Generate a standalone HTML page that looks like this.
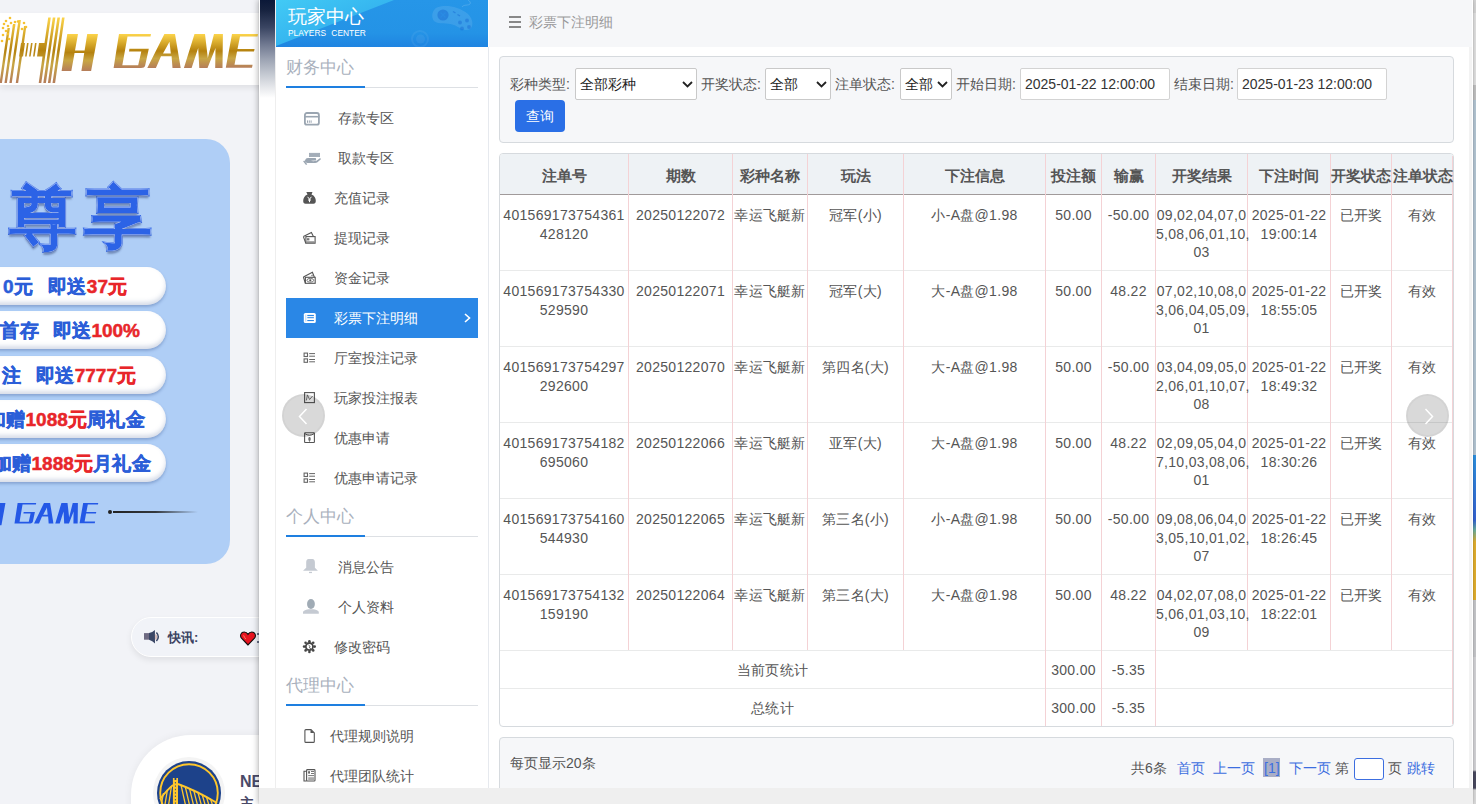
<!DOCTYPE html>
<html><head><meta charset="utf-8">
<style>
*{box-sizing:border-box;margin:0;padding:0}
html,body{width:1476px;height:804px;overflow:hidden}
body{position:relative;background:#f2f3f7;font-family:"Liberation Sans",sans-serif;font-size:14px;color:#555}
.a{position:absolute}
/* ---------- background page ---------- */
#banner{position:absolute;left:0;top:13px;width:300px;height:72px;background:#fff;box-shadow:0 3px 6px rgba(0,0,0,.08)}
#promo{position:absolute;left:-40px;top:139px;width:270px;height:425px;background:#afcef6;border-radius:24px}
.pill{position:absolute;left:-60px;width:266px;height:38px;background:#fff;border-radius:19px;box-shadow:0 2px 3px rgba(60,90,150,.35), inset 0 -3px 4px rgba(120,140,180,.3);font-weight:bold;font-size:19px;letter-spacing:.4px;word-spacing:5px;line-height:39px;color:#2b5ed8;-webkit-text-stroke:.5px currentColor;white-space:nowrap;text-align:right;padding-right:40px}
.pill b{color:#e8262a;letter-spacing:0px}
#news{position:absolute;left:131px;top:617px;width:200px;height:40px;border-radius:20px;background:#f1f3f8;border:1px solid #fff;box-shadow:0 3px 6px rgba(0,0,0,.08)}
#card2{position:absolute;left:131px;top:735px;width:300px;height:200px;border-radius:60px;background:#fff;box-shadow:0 0 8px rgba(0,0,0,.06)}
/* ---------- modal ---------- */
#mshadow{position:absolute;left:259px;top:0;width:1214px;height:804px;box-shadow:-1px 0 6px rgba(0,0,0,.28), 0 0 1px rgba(0,0,0,.2);background:#fff}
#stripline{position:absolute;left:275px;top:0;width:1px;height:788px;background:#eeeeee}
#strip{position:absolute;left:260px;top:0;width:15px;height:98px;background:linear-gradient(#0b1838 0%,#16223f 10%,#3a4562 28%,#6f7890 45%,#9ba2b2 60%,#c2c7d0 75%,#e3e5e9 88%,#fff 100%)}
#sidehead{position:absolute;left:276px;top:0;width:212px;height:47px;background:linear-gradient(#2696e8 0%,#2493e6 70%,#1f84e1 100%);overflow:hidden}
#sideborder{position:absolute;left:488px;top:47px;width:1px;height:757px;background:#e6e9ee}
.sec{position:absolute;left:286px;width:192px;height:30px;color:#a9b1bd;font-size:17px;line-height:20px}
.sec:after{content:"";position:absolute;left:0;top:29px;width:192px;height:1px;background:#dde0e4}
.sec:before{content:"";position:absolute;left:0;top:28px;width:79px;height:2px;background:#1e7fe0;z-index:1}
.mi{position:absolute;left:286px;width:192px;height:40px;line-height:40px;color:#555;font-size:14px}
.mi svg{position:absolute}
.mi .tx{position:absolute;top:0}
.mi.act{background:#2a87e6;color:#fff}
#chead{position:absolute;left:489px;top:0;width:983px;height:47px;background:#f6f7f9}
#rstrip{position:absolute;left:1469px;top:47px;width:3px;height:741px;background:#f3f3f3}
.box{position:absolute;background:#f6f7f9;border:1px solid #d6dade;border-radius:4px}
.lbl{position:absolute;top:74px;line-height:20px;font-size:14px;color:#555;white-space:nowrap}
.sel{position:absolute;top:68px;height:32px;background:#fff;border:1px solid #c9c9c9;border-radius:2px;color:#222;font-size:14px;line-height:30px;padding-left:4px;white-space:nowrap}
.sel svg{position:absolute;right:3px;top:12px}
.inp{position:absolute;top:68px;height:32px;background:#fff;border:1px solid #d3d3d3;border-radius:2px;color:#333;font-size:14px;line-height:30px;padding-left:4px;white-space:nowrap}
#btn{position:absolute;left:515px;top:100px;width:50px;height:32px;background:#2a6fe6;border-radius:4px;color:#fff;font-size:14px;line-height:32px;text-align:center}
/* table */
.tb{position:absolute;border:1px solid #d6dade;border-radius:4px;background:#fff}
.th{position:absolute;background:#eef2f5;border-radius:3px 3px 0 0}
.hl{position:absolute;height:1px;background:#e9eaea}
.hl.hb{background:#a09a9a}
.vl{position:absolute;width:1px;background:#f4d2d5}
.ht{position:absolute;top:156px;height:39px;line-height:39px;text-align:center;font-weight:bold;font-size:15px;color:#555;white-space:nowrap}
.td{position:absolute;text-align:center;font-size:14px;line-height:18.5px;color:#555;white-space:nowrap;letter-spacing:.3px}
.ts{position:absolute;height:37px;line-height:38px;text-align:center;font-size:14px;color:#555;white-space:nowrap;letter-spacing:.3px}
#hscroll{position:absolute;left:259px;top:788px;width:1214px;height:16px;background:#efefef}
.arrow{position:absolute;width:43px;height:43px;border-radius:50%;background:rgba(0,0,0,.15);border:2px solid rgba(0,0,0,.03);top:394px}
.pg{position:absolute;top:758px;line-height:20px;font-size:14px;white-space:nowrap;color:#555}
.pg.l{color:#3c6ee0}
</style></head><body>

<!-- background page -->
<div id="banner">
 <svg width="260" height="72" style="position:absolute;left:0;top:0">
  <defs>
   <linearGradient id="gold" x1="0" y1="0" x2="0" y2="1">
    <stop offset="0" stop-color="#fcd44a"/><stop offset=".5" stop-color="#b5820f"/><stop offset=".72" stop-color="#c8a644"/><stop offset="1" stop-color="#b57d5a"/>
   </linearGradient>
   <linearGradient id="gold2" x1="0" y1="0" x2="0" y2="1" gradientUnits="userSpaceOnUse" >
    <stop offset="0.06" stop-color="#fcd44a"/><stop offset=".5" stop-color="#b5820f"/><stop offset=".75" stop-color="#c8a644"/><stop offset=".95" stop-color="#b57d5a"/>
   </linearGradient>
  </defs>
  <g fill="url(#gold)">
   <!-- striped H -->
   <path d="M48.20 4.5 L50.80 4.5 L41.30 70 L38.70 70Z M52.80 4.5 L55.40 4.5 L45.90 70 L43.30 70Z M57.40 4.5 L60.00 4.5 L50.50 70 L47.90 70Z M62.00 4.5 L64.60 4.5 L55.10 70 L52.50 70Z M7.50 15 L9.90 15 L1.93 70 L-0.47 70Z M13.00 11 L15.40 11 L6.85 70 L4.45 70Z M18.50 7 L20.90 7 L11.77 70 L9.37 70Z M24.00 13 L26.40 13 L18.14 70 L15.74 70Z M21.00 30 L25.00 30 L23.04 43.5 L19.04 43.5Z M27.00 30 L28.60 30 L26.64 43.5 L25.04 43.5Z M31.00 30 L32.60 30 L30.64 43.5 L29.04 43.5Z M35.00 30 L36.60 30 L34.64 43.5 L33.04 43.5Z M39.00 30 L45.00 30 L43.04 43.5 L37.04 43.5Z"/>
   <g id="hgame">
   <!-- H -->
   <path d="M67.3 21 L78 21 L71.3 58 L61.6 58Z M87.2 21 L98 21 L91.1 58 L81.4 58Z M72 37.5 L90 37.5 L89.5 40 L71.5 40Z"/>
   <!-- G -->
   <path d="M119 21 L151 21 L150.5 23.6 L127.5 23.6 L122.3 52.2 L138.2 52.2 L141.3 38.4 L129 38.4 L129.4 35.8 L148.8 35.8 L145.1 52.8 Q144.4 55 141 55 L113.6 55Z"/>
   <!-- A -->
   <path d="M147.3 55 L164.4 21 L175 21 L180.7 55 L172.5 55 L171.6 43.3 L161 43.3 L155.9 55Z M163 40.5 L170.8 40.5 L169.5 28.7Z" fill-rule="evenodd"/>
   <!-- M -->
   <path d="M183.9 55 L194.5 21 L205 21 L207.8 45 L214 21 L222.9 21 L222.5 55 L215.2 55 L215.5 35 L207.5 55 L199.3 55 L198.2 35 L191.6 55Z"/>
   <!-- E -->
   <path d="M232 21 L258 21 L257.5 23.6 L240 23.6 L237.5 36 L254.6 36 L254 38.4 L237 38.4 L234.5 51.8 L252.6 51.8 L252 54.7 L225.8 54.7Z"/>
   </g>
  </g>
  <g fill="#f6c232">
   <circle cx="10" cy="5" r="1.3"/><circle cx="6" cy="8" r="1.3"/><circle cx="11" cy="10" r="1.3"/><circle cx="4" cy="11" r="1.3"/><circle cx="15" cy="9" r="1.3"/><circle cx="18" cy="8.5" r="1.3"/><circle cx="24" cy="10" r="1.3"/><circle cx="26" cy="14" r="1.3"/><circle cx="3" cy="15" r="1.3"/><circle cx="8" cy="13" r="1.3"/><circle cx="6" cy="18" r="1.3"/><circle cx="3" cy="22" r="1.3"/><circle cx="2" cy="28" r="1.3"/><circle cx="8" cy="21" r="1.3"/><circle cx="9" cy="26" r="1.3"/><circle cx="22" cy="16" r="1.3"/><circle cx="14" cy="13" r="1.3"/>
  </g>
 </svg>
</div>

<div id="promo">
 <div class="a" style="left:49px;top:40px;font-size:68px;font-weight:900;color:#2c63e6;letter-spacing:7px;-webkit-text-stroke:2px #2c63e6;paint-order:stroke fill;line-height:76px;text-shadow:0 0 1.5px #fff,0 0 1px #fff,0 3px 2px rgba(40,60,110,.45)">尊享</div>
 <div class="pill" style="top:128px;padding-right:39px;word-spacing:9px">0元 即送<b>37元</b></div>
 <div class="pill" style="top:172px;padding-right:26px;word-spacing:8px">首存 即送<b>100%</b></div>
 <div class="pill" style="top:217px;padding-right:30px;word-spacing:9px">注 即送<b>7777元</b></div>
 <div class="pill" style="top:261px;padding-right:21px">加赠<b>1088元</b>周礼金</div>
 <div class="pill" style="top:305px;padding-right:15px">加赠<b>1888元</b>月礼金</div>
 <svg class="a" style="left:0;top:0" width="270" height="425"><g fill="#2458e6" transform="translate(54.5,364) scale(0.58,0.6) translate(-113.6,-21)"><use href="#hgame"/></g></svg>
 <div class="a" style="left:148px;top:371px;width:4px;height:4px;border-radius:50%;background:#222"></div>
 <div class="a" style="left:153px;top:372px;width:85px;height:2px;background:linear-gradient(90deg,#222,rgba(30,30,30,.85) 50%,rgba(60,60,60,0))"></div>
</div>

<div id="news">
 <svg class="a" style="left:12px;top:12px" width="17" height="15" viewBox="0 0 17 15"><rect x="0" y="3.1" width="5" height="6.6" fill="#6e6a82"/><path d="M5 3.1 Q8.5 2.4 10.9 0.1 L11 13.5 Q8.5 11 5 9.7Z" fill="#3b4766"/><path d="M11 4.2 A2.2 2.7 0 0 1 11 9.6Z" fill="#c4a09c" opacity=".7"/><path d="M12.4 2.4 Q16.2 6.6 12.4 11" stroke="#3b4766" stroke-width="1.5" fill="none"/></svg>
 <div class="a" style="left:36px;top:10px;font-size:13px;font-weight:bold;color:#3b4262;line-height:20px">快讯:</div>
 <svg class="a" style="left:108px;top:13px" width="16" height="15" viewBox="0 0 16 15"><path d="M8 14 L1.5 7.2 C-0.5 4.6 1 1 4.2 1 C6 1 7.3 2.2 8 3.4 C8.7 2.2 10 1 11.8 1 C15 1 16.5 4.6 14.5 7.2Z" fill="#e8131f" stroke="#111" stroke-width="1.1"/><path d="M3.6 4.3 Q4.2 6.2 5.8 8" stroke="#f08a6a" stroke-width=".9" fill="none"/></svg><div class="a" style="left:125px;top:15px;width:2px;height:2px;border-radius:50%;background:#3b4766"></div><div class="a" style="left:125px;top:23px;width:2px;height:2px;border-radius:50%;background:#3b4766"></div>
</div>

<div id="card2">
 <div class="a" style="left:22px;top:22px;width:72px;height:72px;border-radius:50%;background:#f4f4f4"></div>
 <svg class="a" style="left:26px;top:26px" width="64" height="64" viewBox="0 0 64 64"><circle cx="32" cy="32" r="32" fill="#1d428a"/><circle cx="32" cy="32" r="28.8" fill="none" stroke="#ffc72c" stroke-width="1.9"/><path d="M24.0 24.0 L33.0 64 M28.2 25.5 L37.2 64 M32.4 27.1 L41.4 64 M36.6 28.9 L45.6 64 M40.8 30.9 L49.8 64 M45.0 33.0 L54.0 64 M49.2 35.3 L58.2 64 M53.4 37.8 L62.4 64 M14.5 25.0 L8.5 64 M10.5 28.5 L4.5 64 M6.5 32.0 L0.5 64" stroke="#ffc72c" stroke-width="1.3" fill="none"/><path d="M21 23 Q38 29 60 42" stroke="#ffc72c" stroke-width="1.9" fill="none"/><path d="M16 24 Q10 29 3 38" stroke="#ffc72c" stroke-width="1.7" fill="none"/><path d="M15.9 17 H17.6 V19 H19.3 V17 H21 V64 H15.9Z" fill="#ffc72c"/><path d="M18.4 21 V64" stroke="#1d428a" stroke-width=".9" stroke-dasharray="1.4 2"/></svg>
 <div class="a" style="left:109px;top:37px;font-size:16px;font-weight:bold;color:#4a4a68;line-height:20px">NE</div>
 <div class="a" style="left:109px;top:58px;font-size:14px;font-weight:bold;color:#4a4a68;line-height:20px">主</div>
</div>

<div class="a" style="left:1473px;top:0;width:3px;height:13px;background:#d6d6d6"></div>
<div class="a" style="left:1473px;top:13px;width:3px;height:72px;background:#e2e2e2"></div>
<div class="a" style="left:1473px;top:85px;width:3px;height:15px;background:#c2c2c2"></div>
<div class="a" style="left:1473px;top:100px;width:3px;height:704px;background:linear-gradient(#b5c7d5 0,#b5c7d5 355px,#2d93e3 355px,#3563d4 420px,#6ab0a0 430px,#e3b02e 442px,#e3b02e 500px,#c8c9cc 500px,#c8c9cc 557px,#d5d5d8 557px,#d5d5d8 670px,#4a4a60 672px,#4a4a60 688px,#dcdcdc 690px)"></div>

<!-- modal -->
<div id="mshadow"></div>
<div id="strip"></div><div id="stripline"></div>
<div id="sidehead">
 <svg class="a" style="left:0;top:0" width="212" height="47">
  <defs><linearGradient id="cy" x1="0" y1="0" x2="1" y2="1"><stop offset="0" stop-color="#42caf5"/><stop offset="1" stop-color="#2aa2ea"/></linearGradient></defs>
  <path d="M0 0 L118 0 L0 46Z" fill="url(#cy)"/>
  <path d="M160 8 C168 4 182 6 192 14 C197 19 198 26 194 29 C190 32 184 28 178 25 C171 22 163 25 158 21 C155 17 156 11 160 8Z" fill="#fff" opacity=".1"/>
  <circle cx="167" cy="15" r="5.6" fill="#1b70d6" opacity=".55"/>
  <path d="M164.5 12.5 L169.5 17.5 M169.5 12.5 L164.5 17.5" stroke="#2a8ee6" stroke-width="1.3" opacity=".7"/>
  <g fill="#1b70d6" opacity=".5"><circle cx="184" cy="22.5" r="1.9"/><circle cx="191" cy="20.5" r="1.9"/><circle cx="186" cy="28.5" r="1.9"/><circle cx="193" cy="27" r="1.9"/></g>
  <path d="M177 11.5 L179.5 13 M181.5 14.5 L184 16" stroke="#1b70d6" stroke-width="1.4" opacity=".55"/>
  <path d="M186 7 C188 4 192 6 194 4 C195 3 194 1 192 0" stroke="#fff" stroke-opacity=".15" fill="none"/>
  <circle cx="144" cy="39" r="8" fill="none" stroke="#fff" stroke-opacity=".06" stroke-width="2"/>
  <circle cx="144.5" cy="39" r="4.5" fill="#fff" opacity=".06"/>
 </svg>
 <div class="a" style="left:12px;top:7px;font-size:19px;line-height:20px;color:#fff;letter-spacing:0px">玩家中心</div>
 <div class="a" style="left:12px;top:27px;font-size:8.4px;line-height:12px;color:#fff;letter-spacing:0px;word-spacing:3px">PLAYERS CENTER</div>
</div>
<div id="sideborder"></div>

<div class="sec" style="top:58px">财务中心</div>
<div class="mi" style="top:98px">
 <svg style="left:12px;top:8px" width="24" height="24" viewBox="0 0 24 24"><rect x="6.9" y="7" width="14" height="11.7" rx="2" fill="none" stroke="#9aa5b1" stroke-width="1.8"/><rect x="6.5" y="9.9" width="14.8" height="1.6" fill="#9aa5b1"/><rect x="9" y="14.4" width="1" height="2.4" fill="#9aa5b1"/><rect x="10.8" y="14.4" width="1" height="2.4" fill="#9aa5b1"/><rect x="12.6" y="14.4" width="1" height="2.4" fill="#9aa5b1"/></svg>
 <span class="tx" style="left:52px">存款专区</span></div>
<div class="mi" style="top:138px">
 <svg style="left:14px;top:12px" width="24" height="18" viewBox="0 0 24 18"><rect x="9.3" y="3.2" width="10.4" height="3.5" fill="#a3adb8" stroke="#97a2ae" stroke-width=".6"/><path d="M5 10.5 C5.5 8.8 6.5 8 8 8 L15.5 8 C16.4 8 16.4 10.6 15.5 10.6 L11 10.8 C12 11.3 14.5 11.3 16.5 10.7 L19.8 8.3 C20.6 7.8 21.3 8.8 20.6 9.5 L17.5 12.3 C16.8 12.8 16 13 15 13 L8.5 13 C7 13 5.8 12.5 5 11.5Z" fill="#9aa5b1"/><path d="M3.1 11.3 L4.3 10.5 L7.2 14.2 L6 15.1 Z" fill="#9aa5b1"/></svg>
 <span class="tx" style="left:52px">取款专区</span></div>
<div class="mi" style="top:178px">
 <svg style="left:14px;top:10px" width="20" height="18" viewBox="0 0 20 18"><path d="M6.3 4 L12.5 4 L11.5 6.5 C14.5 7.5 15.9 10.5 15.8 13 C15.7 15 15 15.7 13.5 15.7 L5.5 15.7 C4 15.7 3.2 15 3.2 13 C3.2 10.5 4.5 7.5 7.5 6.5Z" fill="#555"/><path d="M7.6 8.8 L9.5 11.2 L11.4 8.8 M9.5 11.2 V14.2 M8 12 H11" stroke="#fff" stroke-width="1" fill="none"/></svg>
 <span class="tx" style="left:48px">充值记录</span></div>
<div class="mi" style="top:218px">
 <svg style="left:14px;top:10px" width="20" height="18" viewBox="0 0 20 18"><path d="M3.4 8.6 L11.4 4.4 L13.4 8.4" stroke="#555" stroke-width="1.1" fill="none"/><path d="M3.4 8.6 L5.8 15.2" stroke="#555" stroke-width="1.1"/><rect x="5.9" y="8.6" width="9.2" height="6.6" fill="none" stroke="#555" stroke-width="1.1"/><rect x="7" y="10.2" width="2.4" height="2.2" fill="#777"/><rect x="6.4" y="13.3" width="8.2" height="1.6" fill="#888"/></svg>
 <span class="tx" style="left:48px">提现记录</span></div>
<div class="mi" style="top:258px">
 <svg style="left:14px;top:10px" width="20" height="18" viewBox="0 0 20 18"><path d="M3.4 9 L12.4 4.2 L14.4 9.2" stroke="#555" stroke-width="1.1" fill="none"/><path d="M3.4 9 L5.4 15.4" stroke="#555" stroke-width="1.1"/><rect x="5.4" y="9.3" width="9.8" height="6" fill="none" stroke="#555" stroke-width="1.1"/><ellipse cx="10.3" cy="12.3" rx="3.4" ry="1.9" fill="none" stroke="#666" stroke-width=".9"/><circle cx="10.3" cy="12.3" r="1.1" fill="#555"/><circle cx="12" cy="7.5" r=".7" fill="#666"/></svg>
 <span class="tx" style="left:48px">资金记录</span></div>
<div class="mi act" style="top:298px">
 <svg style="left:14px;top:10px" width="20" height="18" viewBox="0 0 20 18"><rect x="3.8" y="5" width="12" height="10" rx="1.6" fill="#fff"/><g fill="#2a87e6"><rect x="7.3" y="6.9" width="6.6" height="1.2"/><rect x="7.3" y="9.2" width="6.6" height="1"/><rect x="7.3" y="12" width="6.6" height="1.1"/><rect x="5.3" y="6.6" width="1" height="7" opacity=".35"/></g></svg>
 <span class="tx" style="left:48px">彩票下注明细</span>
 <svg style="left:178px;top:15px" width="7" height="10" viewBox="0 0 7 10"><path d="M1 1 L5.5 5 L1 9" stroke="#fff" stroke-width="1.6" fill="none"/></svg></div>
<div class="mi" style="top:338px">
 <svg style="left:14px;top:12px" width="20" height="18" viewBox="0 0 20 18"><rect x="4.1" y="3.1" width="3.4" height="3.4" fill="none" stroke="#666" stroke-width="1.1"/><rect x="4.1" y="8.9" width="3.4" height="3.4" fill="none" stroke="#666" stroke-width="1.1"/><path d="M9.2 3.6 H15 M9.2 6.2 H15 M9.2 9.5 H15 M9.2 11.8 H15" stroke="#666" stroke-width="1"/></svg>
 <span class="tx" style="left:48px">厅室投注记录</span></div>
<div class="mi" style="top:378px">
 <svg style="left:14px;top:10px" width="20" height="18" viewBox="0 0 20 18"><rect x="4.6" y="4.6" width="9.8" height="10" fill="none" stroke="#555" stroke-width="1.1"/><path d="M6.4 12.4 L7.4 6.9 L9.6 11.5 L12.6 8" stroke="#666" stroke-width=".9" fill="none"/></svg>
 <span class="tx" style="left:48px">玩家投注报表</span></div>
<div class="mi" style="top:418px">
 <svg style="left:14px;top:10px" width="20" height="18" viewBox="0 0 20 18"><rect x="4.6" y="4.7" width="9.8" height="9.8" rx=".6" fill="none" stroke="#555" stroke-width="1.1"/><path d="M4.8 5.6 Q9.5 8.8 14.2 5.6" stroke="#555" stroke-width="1" fill="none"/><ellipse cx="9.5" cy="11" rx="1.3" ry="1.9" fill="#777"/><path d="M9.5 9 V14.2" stroke="#666" stroke-width=".6"/></svg>
 <span class="tx" style="left:48px">优惠申请</span></div>
<div class="mi" style="top:458px">
 <svg style="left:14px;top:12px" width="20" height="18" viewBox="0 0 20 18"><rect x="4.1" y="3.1" width="3.4" height="3.4" fill="none" stroke="#666" stroke-width="1.1"/><rect x="4.1" y="8.9" width="3.4" height="3.4" fill="none" stroke="#666" stroke-width="1.1"/><path d="M9.2 3.6 H15 M9.2 6.2 H15 M9.2 9.5 H15 M9.2 11.8 H15" stroke="#666" stroke-width="1"/></svg>
 <span class="tx" style="left:48px">优惠申请记录</span></div>

<div class="sec" style="top:507px">个人中心</div>
<div class="mi" style="top:547px">
 <svg style="left:12px;top:9px" width="24" height="20" viewBox="0 0 24 20"><path d="M10.5 3 L14.5 3 C16 3 16.9 4.5 16.9 6.5 L16.9 11.8 L19.9 14.7 L5 14.7 L8.2 11.8 L8.2 6.5 C8.2 4.5 9 3 10.5 3Z" fill="#c5cad2"/><rect x="11" y="15.8" width="3" height="1.3" fill="#c5cad2"/></svg>
 <span class="tx" style="left:52px">消息公告</span></div>
<div class="mi" style="top:587px">
 <svg style="left:12px;top:9px" width="24" height="20" viewBox="0 0 24 20"><ellipse cx="12.95" cy="8" rx="3.9" ry="4.9" fill="#a0abb5"/><path d="M5 17.8 L5 15.8 C6 14.2 9 13.4 10.5 13.2 L15.5 13.2 C17 13.4 20 14.2 20.8 15.8 L20.8 17.8Z" fill="#c5cad2"/></svg>
 <span class="tx" style="left:52px">个人资料</span></div>
<div class="mi" style="top:627px">
 <svg style="left:14px;top:10px" width="20" height="18" viewBox="0 0 20 18"><g fill="#444"><circle cx="9.4" cy="4.3" r="1.3"/><circle cx="9.4" cy="14.9" r="1.3"/><circle cx="4.1" cy="9.6" r="1.3"/><circle cx="14.7" cy="9.6" r="1.3"/><circle cx="5.6" cy="5.8" r="1.3"/><circle cx="13.2" cy="5.8" r="1.3"/><circle cx="5.6" cy="13.4" r="1.3"/><circle cx="13.2" cy="13.4" r="1.3"/></g><circle cx="9.4" cy="9.6" r="3.6" fill="none" stroke="#444" stroke-width="1.8"/><path d="M8.6 8 C9.8 8.6 10.4 10 9.4 10.8 L12.6 13.4" stroke="#555" stroke-width="1" fill="none"/></svg>
 <span class="tx" style="left:48px">修改密码</span></div>

<div class="sec" style="top:676px">代理中心</div>
<div class="mi" style="top:716px">
 <svg style="left:14px;top:10px" width="20" height="20" viewBox="0 0 20 20"><path d="M5.9 3.6 H11 L14.3 6.9 V15.4 A1 1 0 0 1 13.3 16.4 H5.9 A1 1 0 0 1 4.9 15.4 V4.6 A1 1 0 0 1 5.9 3.6Z" fill="none" stroke="#555" stroke-width="1.1"/><path d="M10.5 3.4 V7.1 H14.5Z" fill="#555"/></svg>
 <span class="tx" style="left:44px">代理规则说明</span></div>
<div class="mi" style="top:756px">
 <svg style="left:14px;top:10px" width="20" height="20" viewBox="0 0 20 20"><rect x="6.6" y="3.6" width="8.4" height="11.4" rx=".8" fill="none" stroke="#555" stroke-width="1.1"/><path d="M6.6 5.3 H4 V15 H6.6" fill="none" stroke="#555" stroke-width="1.1"/><rect x="8.2" y="5.2" width="1.7" height="2.4" fill="#555"/><path d="M11 5.5 H14 M11 7.5 H14 M8.2 9.6 H14" stroke="#666" stroke-width=".9"/><rect x="8.2" y="11.2" width="5.8" height="3.4" fill="#aaa"/></svg>
 <span class="tx" style="left:44px">代理团队统计</span></div>

<!-- content -->
<div id="chead">
 <svg class="a" style="left:20px;top:16px" width="12" height="12" viewBox="0 0 12 12"><rect x="0" y="0" width="12" height="2" fill="#888"/><rect x="0" y="5" width="12" height="2" fill="#888"/><rect x="0" y="10" width="12" height="2" fill="#888"/></svg>
 <div class="a" style="left:40px;top:12px;font-size:14px;line-height:20px;color:#999">彩票下注明细</div>
</div>
<div id="rstrip"></div>

<div class="box" style="left:499px;top:56px;width:955px;height:87px"></div>
<div class="lbl" style="left:510px">彩种类型:</div>
<div class="sel" style="left:575px;width:122px">全部彩种<svg width="11" height="7" viewBox="0 0 11 7"><path d="M1 1 L5.5 5.5 L10 1" stroke="#222" stroke-width="1.8" fill="none"/></svg></div>
<div class="lbl" style="left:701px">开奖状态:</div>
<div class="sel" style="left:765px;width:66px">全部<svg width="11" height="7" viewBox="0 0 11 7"><path d="M1 1 L5.5 5.5 L10 1" stroke="#222" stroke-width="1.8" fill="none"/></svg></div>
<div class="lbl" style="left:835px">注单状态:</div>
<div class="sel" style="left:900px;width:52px">全部<svg width="11" height="7" viewBox="0 0 11 7"><path d="M1 1 L5.5 5.5 L10 1" stroke="#222" stroke-width="1.8" fill="none"/></svg></div>
<div class="lbl" style="left:956px">开始日期:</div>
<div class="inp" style="left:1020px;width:150px">2025-01-22 12:00:00</div>
<div class="lbl" style="left:1174px">结束日期:</div>
<div class="inp" style="left:1237px;width:150px">2025-01-23 12:00:00</div>
<div id="btn">查询</div>

<div class="tb" style="left:499px;top:153px;width:955px;height:574px"></div>
<div class="th" style="left:500px;top:154px;width:953px;height:40px"></div>
<div class="hl hb" style="left:500px;top:194px;width:953px"></div>
<div class="hl" style="left:500px;top:270px;width:953px"></div>
<div class="hl" style="left:500px;top:346px;width:953px"></div>
<div class="hl" style="left:500px;top:422px;width:953px"></div>
<div class="hl" style="left:500px;top:498px;width:953px"></div>
<div class="hl" style="left:500px;top:574px;width:953px"></div>
<div class="hl" style="left:500px;top:650px;width:953px"></div>
<div class="hl" style="left:500px;top:688px;width:953px"></div>
<div class="vl" style="left:628px;top:154px;height:496px"></div>
<div class="vl" style="left:732px;top:154px;height:496px"></div>
<div class="vl" style="left:807px;top:154px;height:496px"></div>
<div class="vl" style="left:903px;top:154px;height:496px"></div>
<div class="vl" style="left:1045px;top:154px;height:572px"></div>
<div class="vl" style="left:1101px;top:154px;height:572px"></div>
<div class="vl" style="left:1155px;top:154px;height:572px"></div>
<div class="vl" style="left:1247px;top:154px;height:496px"></div>
<div class="vl" style="left:1330px;top:154px;height:496px"></div>
<div class="vl" style="left:1391px;top:154px;height:496px"></div>
<div class="vl" style="left:1452px;top:156px;height:568px"></div>
<div class="ht" style="left:500px;width:128px">注单号</div>
<div class="ht" style="left:629px;width:103px">期数</div>
<div class="ht" style="left:733px;width:74px">彩种名称</div>
<div class="ht" style="left:808px;width:95px">玩法</div>
<div class="ht" style="left:904px;width:141px">下注信息</div>
<div class="ht" style="left:1046px;width:55px">投注额</div>
<div class="ht" style="left:1102px;width:53px">输赢</div>
<div class="ht" style="left:1156px;width:91px">开奖结果</div>
<div class="ht" style="left:1248px;width:82px">下注时间</div>
<div class="ht" style="left:1331px;width:60px">开奖状态</div>
<div class="ht" style="left:1392px;width:61px">注单状态</div>
<div class="td" style="left:500px;top:206px;width:128px">401569173754361<br>428120</div>
<div class="td" style="left:629px;top:206px;width:103px">20250122072</div>
<div class="td" style="left:733px;top:206px;width:74px">幸运飞艇新</div>
<div class="td" style="left:808px;top:206px;width:95px">冠军(小)</div>
<div class="td" style="left:904px;top:206px;width:141px">小-A盘@1.98</div>
<div class="td" style="left:1046px;top:206px;width:55px">50.00</div>
<div class="td" style="left:1102px;top:206px;width:53px">-50.00</div>
<div class="td" style="left:1156px;top:206px;width:91px">09,02,04,07,0<br>5,08,06,01,10,<br>03</div>
<div class="td" style="left:1248px;top:206px;width:82px">2025-01-22<br>19:00:14</div>
<div class="td" style="left:1331px;top:206px;width:60px">已开奖</div>
<div class="td" style="left:1392px;top:206px;width:61px">有效</div>
<div class="td" style="left:500px;top:282px;width:128px">401569173754330<br>529590</div>
<div class="td" style="left:629px;top:282px;width:103px">20250122071</div>
<div class="td" style="left:733px;top:282px;width:74px">幸运飞艇新</div>
<div class="td" style="left:808px;top:282px;width:95px">冠军(大)</div>
<div class="td" style="left:904px;top:282px;width:141px">大-A盘@1.98</div>
<div class="td" style="left:1046px;top:282px;width:55px">50.00</div>
<div class="td" style="left:1102px;top:282px;width:53px">48.22</div>
<div class="td" style="left:1156px;top:282px;width:91px">07,02,10,08,0<br>3,06,04,05,09,<br>01</div>
<div class="td" style="left:1248px;top:282px;width:82px">2025-01-22<br>18:55:05</div>
<div class="td" style="left:1331px;top:282px;width:60px">已开奖</div>
<div class="td" style="left:1392px;top:282px;width:61px">有效</div>
<div class="td" style="left:500px;top:358px;width:128px">401569173754297<br>292600</div>
<div class="td" style="left:629px;top:358px;width:103px">20250122070</div>
<div class="td" style="left:733px;top:358px;width:74px">幸运飞艇新</div>
<div class="td" style="left:808px;top:358px;width:95px">第四名(大)</div>
<div class="td" style="left:904px;top:358px;width:141px">大-A盘@1.98</div>
<div class="td" style="left:1046px;top:358px;width:55px">50.00</div>
<div class="td" style="left:1102px;top:358px;width:53px">-50.00</div>
<div class="td" style="left:1156px;top:358px;width:91px">03,04,09,05,0<br>2,06,01,10,07,<br>08</div>
<div class="td" style="left:1248px;top:358px;width:82px">2025-01-22<br>18:49:32</div>
<div class="td" style="left:1331px;top:358px;width:60px">已开奖</div>
<div class="td" style="left:1392px;top:358px;width:61px">有效</div>
<div class="td" style="left:500px;top:434px;width:128px">401569173754182<br>695060</div>
<div class="td" style="left:629px;top:434px;width:103px">20250122066</div>
<div class="td" style="left:733px;top:434px;width:74px">幸运飞艇新</div>
<div class="td" style="left:808px;top:434px;width:95px">亚军(大)</div>
<div class="td" style="left:904px;top:434px;width:141px">大-A盘@1.98</div>
<div class="td" style="left:1046px;top:434px;width:55px">50.00</div>
<div class="td" style="left:1102px;top:434px;width:53px">48.22</div>
<div class="td" style="left:1156px;top:434px;width:91px">02,09,05,04,0<br>7,10,03,08,06,<br>01</div>
<div class="td" style="left:1248px;top:434px;width:82px">2025-01-22<br>18:30:26</div>
<div class="td" style="left:1331px;top:434px;width:60px">已开奖</div>
<div class="td" style="left:1392px;top:434px;width:61px">有效</div>
<div class="td" style="left:500px;top:510px;width:128px">401569173754160<br>544930</div>
<div class="td" style="left:629px;top:510px;width:103px">20250122065</div>
<div class="td" style="left:733px;top:510px;width:74px">幸运飞艇新</div>
<div class="td" style="left:808px;top:510px;width:95px">第三名(小)</div>
<div class="td" style="left:904px;top:510px;width:141px">小-A盘@1.98</div>
<div class="td" style="left:1046px;top:510px;width:55px">50.00</div>
<div class="td" style="left:1102px;top:510px;width:53px">-50.00</div>
<div class="td" style="left:1156px;top:510px;width:91px">09,08,06,04,0<br>3,05,10,01,02,<br>07</div>
<div class="td" style="left:1248px;top:510px;width:82px">2025-01-22<br>18:26:45</div>
<div class="td" style="left:1331px;top:510px;width:60px">已开奖</div>
<div class="td" style="left:1392px;top:510px;width:61px">有效</div>
<div class="td" style="left:500px;top:586px;width:128px">401569173754132<br>159190</div>
<div class="td" style="left:629px;top:586px;width:103px">20250122064</div>
<div class="td" style="left:733px;top:586px;width:74px">幸运飞艇新</div>
<div class="td" style="left:808px;top:586px;width:95px">第三名(大)</div>
<div class="td" style="left:904px;top:586px;width:141px">大-A盘@1.98</div>
<div class="td" style="left:1046px;top:586px;width:55px">50.00</div>
<div class="td" style="left:1102px;top:586px;width:53px">48.22</div>
<div class="td" style="left:1156px;top:586px;width:91px">04,02,07,08,0<br>5,06,01,03,10,<br>09</div>
<div class="td" style="left:1248px;top:586px;width:82px">2025-01-22<br>18:22:01</div>
<div class="td" style="left:1331px;top:586px;width:60px">已开奖</div>
<div class="td" style="left:1392px;top:586px;width:61px">有效</div>
<div class="ts" style="left:500px;top:651px;width:545px">当前页统计</div>
<div class="ts" style="left:1046px;top:651px;width:55px">300.00</div>
<div class="ts" style="left:1102px;top:651px;width:53px">-5.35</div>
<div class="ts" style="left:500px;top:689px;width:545px">总统计</div>
<div class="ts" style="left:1046px;top:689px;width:55px">300.00</div>
<div class="ts" style="left:1102px;top:689px;width:53px">-5.35</div>


<div class="box" style="left:499px;top:737px;width:955px;height:80px"></div>
<div class="pg" style="left:510px;top:753px">每页显示20条</div>
<div class="pg" style="left:1131px">共6条</div>
<div class="pg l" style="left:1177px">首页</div>
<div class="pg l" style="left:1213px">上一页</div>
<div class="a" style="left:1263px;top:758px;width:17px;height:19px;background:#a9aec6"></div>
<div class="pg l" style="left:1264px">[1]</div>
<div class="pg l" style="left:1289px">下一页</div>
<div class="pg" style="left:1335px">第</div>
<div class="a" style="left:1354px;top:758px;width:30px;height:22px;border:1.5px solid #3c6ee0;border-radius:3px;background:#fff"></div>
<div class="pg" style="left:1388px">页</div>
<div class="pg l" style="left:1407px">跳转</div>

<div id="hscroll"></div>

<div class="arrow" style="left:282px"><svg class="a" style="left:14px;top:12px" width="10" height="17" viewBox="0 0 10 17"><path d="M8.5 1 L1.5 8.5 L8.5 16" stroke="#fff" stroke-width="1.5" fill="none"/></svg></div>
<div class="arrow" style="left:1406px"><svg class="a" style="left:16px;top:12px" width="10" height="17" viewBox="0 0 10 17"><path d="M1.5 1 L8.5 8.5 L1.5 16" stroke="#fff" stroke-width="1.5" fill="none"/></svg></div>

</body></html>
